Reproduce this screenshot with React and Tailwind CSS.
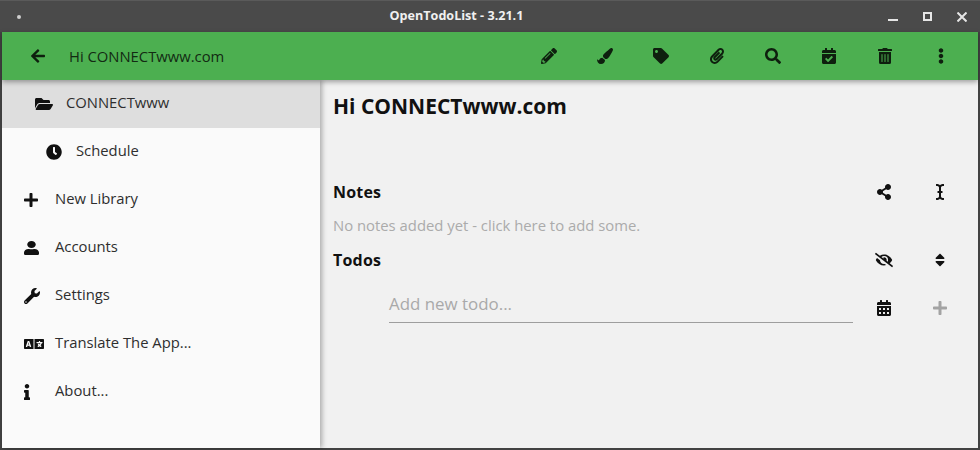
import {
  FaArrowLeft, FaPencilAlt, FaPaintBrush, FaTag, FaPaperclip, FaSearch, FaCalendarCheck, FaTrashAlt,
  FaEllipsisV, FaFolderOpen, FaClock, FaPlus, FaUser, FaWrench, FaLanguage, FaInfo, FaShareAlt,
  FaICursor, FaEyeSlash, FaSort, FaCalendarAlt,
} from 'react-icons/fa';

const toolbarIcons = [FaPencilAlt, FaPaintBrush, FaTag, FaPaperclip, FaSearch, FaCalendarCheck, FaTrashAlt, FaEllipsisV];

const menuItems = [
  { icon: FaFolderOpen, label: 'CONNECTwww', active: true, pad: 'pl-[33px]', size: 'w-[18px] h-[16px]' },
  { icon: FaClock, label: 'Schedule', pad: 'pl-[44px]', box: 'w-[30px]', size: 'w-[16px] h-[16px]' },
  { icon: FaPlus, label: 'New Library', size: 'w-[14px] h-[16px]' },
  { icon: FaUser, label: 'Accounts', size: 'w-[15px] h-[14px]', squat: true },
  { icon: FaWrench, label: 'Settings', size: 'w-[16px] h-[16px]' },
  { icon: FaLanguage, label: 'Translate The App...', size: 'w-[20px] h-[16px]' },
  { icon: FaInfo, label: 'About...', size: 'w-[6px] h-[16px]' },
];

function MenuItem({ item }) {
  const Icon = item.icon;
  return (
    <div className={`h-[48px] flex items-center shrink-0 ${item.pad || 'pl-[22px]'} ${item.active ? 'bg-[#dedede]' : ''}`}>
      <div className={`${item.box || 'w-[31px]'} shrink-0`}>
        <Icon className={item.size} color="#111" preserveAspectRatio={item.squat ? 'none' : undefined} />
      </div>
      <span className="text-[14.8px] text-[#2e2e2e] pb-[4px]">{item.label}</span>
    </div>
  );
}

function SectionHeader({ title, icons }) {
  return (
    <div className="flex items-center h-[24px]">
      <h2 className="text-[16px] font-bold text-[#111] flex-1 tracking-[0.2px]">{title}</h2>
      {icons}
    </div>
  );
}

function IconSlot({ icon: Icon, color = '#111', size = 'w-[16px] h-[16px]' }) {
  return (
    <div className="w-[56px] flex justify-center">
      <Icon className={size} color={color} />
    </div>
  );
}

export default function App() {
  return (
    <div className="w-[980px] h-[450px] flex flex-col overflow-hidden bg-[#424242] font-['Open_Sans',sans-serif]">
      <div className="h-[32px] shrink-0 flex items-center bg-[#4a4a4a] border-t border-[#5a5a5a]">
        <div className="w-[4px] h-[4px] rounded-full bg-[#cfcfcf] ml-[17px]" />
        <div className="flex-1 text-center text-[12.6px] font-bold text-[#f0f0f0] pl-[4px]">OpenTodoList - 3.21.1</div>
        <div className="flex items-center gap-[25px] pr-[13px]">
          <div className="w-[10px] h-[2px] bg-[#e6e6e6] mt-[6px]" />
          <div className="w-[9px] h-[9px] border-2 border-[#e6e6e6]" />
          <svg width="10" height="10" viewBox="0 0 10 10" stroke="#e6e6e6" strokeWidth="2">
            <path d="M0.5 0.5 L9.5 9.5 M9.5 0.5 L0.5 9.5" />
          </svg>
        </div>
      </div>
      <div className="flex-1 min-h-0 flex flex-col mx-[2px] mb-[2px]">
        <header className="h-[48px] shrink-0 bg-[#4caf50] flex items-center shadow-[0_2px_5px_rgba(0,0,0,0.35)] relative z-20">
          <div className="w-[36px] pl-[29px] shrink-0">
            <FaArrowLeft className="w-[14px] h-[16px]" color="#0e1f0e" />
          </div>
          <div className="pl-[31px] flex-1 text-[14.8px] text-[#132a13]">Hi CONNECTwww.com</div>
          <div className="flex items-center pr-[9px]">
            {toolbarIcons.map((Icon, i) => (
              <div key={i} className="w-[56px] flex justify-center">
                <Icon className="w-[16px] h-[16px]" color="#0e1f0e" />
              </div>
            ))}
          </div>
        </header>
        <div className="flex-1 min-h-0 flex">
          <aside className="w-[318px] shrink-0 bg-[#fafafa] flex flex-col shadow-[2px_0_5px_rgba(0,0,0,0.3)] relative z-10">
            {menuItems.map((item) => (
              <MenuItem key={item.label} item={item} />
            ))}
          </aside>
          <main className="flex-1 bg-[#f1f1f1] pl-[13px] flex flex-col">
            <h1 className="text-[21px] font-bold text-[#111] leading-[28px] mt-[12px]">Hi CONNECTwww.com</h1>
            <div className="mt-[60px] pr-[10px]">
              <SectionHeader
                title="Notes"
                icons={
                  <>
                    <IconSlot icon={FaShareAlt} />
                    <IconSlot icon={FaICursor} />
                  </>
                }
              />
              <p className="text-[14.85px] text-[#ababab] leading-[20px] mt-[11px]">No notes added yet - click here to add some.</p>
              <div className="mt-[13px]">
                <SectionHeader
                  title="Todos"
                  icons={
                    <>
                      <IconSlot icon={FaEyeSlash} size="w-[18px] h-[16px]" />
                      <IconSlot icon={FaSort} />
                    </>
                  }
                />
              </div>
              <div className="flex items-center mt-[15px]">
                <div className="flex-1 ml-[56px] h-[36px] border-b border-[#9e9e9e] flex items-center text-[16.9px] text-[#a9a9a9] pb-[1px]">Add new todo...</div>
                <div className="flex ml-[3px] mt-[5px]">
                  <IconSlot icon={FaCalendarAlt} />
                  <IconSlot icon={FaPlus} color="#a3a3a3" />
                </div>
              </div>
            </div>
          </main>
        </div>
      </div>
    </div>
  );
}
